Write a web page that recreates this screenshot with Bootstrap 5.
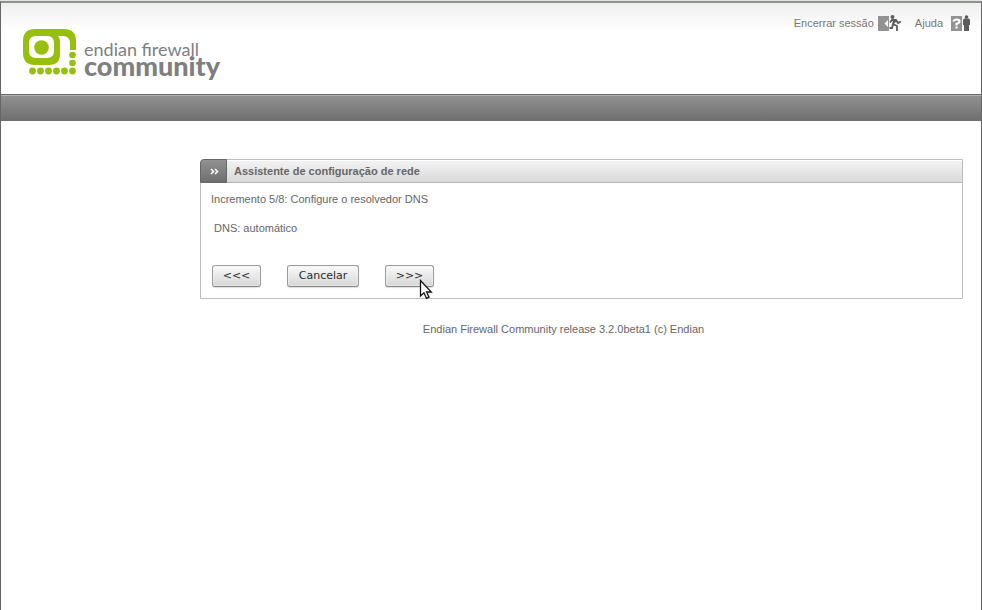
<!DOCTYPE html>
<html lang="pt-BR">
<head>
<meta charset="utf-8">
<meta name="viewport" content="width=device-width, initial-scale=1">
<title>Assistente de configuração de rede</title>
<link href="https://cdn.jsdelivr.net/npm/bootstrap@5.3.0/dist/css/bootstrap.min.css" rel="stylesheet">
<style>
  body { font: 11px/16px "Liberation Sans", Arial, sans-serif; color: #666; background: #fff; }
  a { color: #777; }
  .window-edge { border-top: 1px solid #e2e4e1; }
  .window-frame { flex: 1; border: 1px solid #666; border-top: 2px solid #8f938e; border-bottom: 0; }
  .top-area { height: 91px; background: linear-gradient(#efefef, #fff 28px); }
  .brand { margin: 26px 0 0 22px; gap: 8px; }
  .brand-words { font-family: Lato, sans-serif; color: #7d7f81; margin-top: 13px; }
  .brand-first { font-size: 18px; line-height: 15px; }
  .brand-second { font-size: 27px; font-weight: 900; line-height: 17px; }
  .session-links { padding: 12px 11px 0 0; gap: 14px; }
  .menu-strip { height: 27px; border-top: 1px solid #6b6b6b; box-shadow: inset 0 1px #b2b2b2; background: linear-gradient(#929292, #6e6e6e); }
  .content-area { margin: 38px 18px 0 199px; }
  .wizard { border: 1px solid #bdbdbd; border-top-left-radius: 4px; }
  .wizard-head { height: 23px; background: linear-gradient(#f4f4f4, #d9d9d9); border-bottom: 1px solid #b5b5b5; box-shadow: inset 0 1px #fff; }
  .wizard-tab { width: 27px; height: 24px; margin: -1px 0 -1px -1px; padding-left: 2px; border: 1px solid #686868; border-radius: 4px 0 0 0; background: linear-gradient(#929292, #6e6e6e); }
  .wizard-title { font-size: 11px; line-height: 16px; padding-left: 7px; }
  .wizard-body { padding: 8px 10px 11px; }
  .dns-line { padding: 13px 3px 29px; }
  .wizard-actions { gap: 26px; padding-left: 1px; }
  .tool-btn { --bs-btn-color: #2c2c2c; --bs-btn-hover-color: #2c2c2c; --bs-btn-border-color: #9c9c9c; --bs-btn-hover-border-color: #888; height: 22px; min-width: 49px; padding: 0 10px; font: 11px/20px "DejaVu Sans", sans-serif; border-radius: 3px; border-bottom-color: #858585; background: linear-gradient(#fafafa, #d6d6d6); box-shadow: inset 0 0 0 1px #f4f4f488, 0 1px 1px #0002; }
  .step-btn { padding: 0 9px; }
  .cancel-btn { min-width: 72px; }
  .pointer { left: 34px; top: 14px; pointer-events: none; }
  .release { margin: 22px 36px 0 0; }
</style>
<script src="https://cdn.jsdelivr.net/npm/bootstrap@5.3.0/dist/js/bootstrap.bundle.min.js"></script>
</head>
<body>
<div class="window-edge d-flex flex-column min-vh-100">
<div class="window-frame">
  <header>
    <div class="top-area d-flex justify-content-between align-items-start">
      <div class="brand d-flex">
        <svg width="53" height="46" viewBox="0 0 53 46" fill="#97bf0d" aria-hidden="true">
          <path fill-rule="evenodd" d="M12 0H41Q53 0 53 12V21H47V15Q47 7 40 7H35Q37 9 37 12V25Q37 36 26 36H12Q0 36 0 24V12Q0 0 12 0ZM13 7Q6 7 6 14V22Q6 29 13 29H24Q31 29 31 22V14Q31 7 24 7Z"/>
          <circle cx="18.500" cy="18.500" r="7.300"/>
          <circle cx="49.500" cy="26" r="3.300"/><circle cx="49.500" cy="34" r="3.300"/>
          <circle cx="9.500" cy="42" r="3.400"/><circle cx="17.500" cy="42" r="3.400"/><circle cx="25.500" cy="42" r="3.400"/>
          <circle cx="33.500" cy="42" r="3.400"/><circle cx="41.500" cy="42" r="3.400"/><circle cx="49.500" cy="42" r="3.400"/>
        </svg>
        <div class="brand-words">
          <div class="brand-first">endian firewall</div>
          <div class="brand-second">community</div>
        </div>
      </div>
      <nav class="session-links d-flex">
        <a href="#" class="d-flex text-decoration-none">Encerrar sessão
          <svg class="ms-1" width="23" height="16" viewBox="0 0 23 16" aria-hidden="true">
            <path fill="#929292" d="M0 1H11V16H0Z"/><path fill="#fff" d="M10 5V12L6.500 8.500Z"/>
            <circle cx="14.500" cy="2" r="2" fill="#5c5c5c"/>
            <path d="M12 7.500L14 5L18 5L20 8L23 6.500M18 5L15 9L19 11V16M15 9.500L14 13H11.500M16 5L15 10" fill="none" stroke="#5c5c5c" stroke-width="1.800"/>
          </svg></a>
        <a href="#" class="d-flex text-decoration-none">Ajuda
          <svg class="ms-2" width="19" height="16" viewBox="0 0 19 16" aria-hidden="true">
            <path fill="#929292" d="M0 1H11V16H0Z"/>
            <path d="M2.500 6.500Q3 4.500 5.500 4.500Q8.500 4.500 8.500 6.500Q8.500 8 5.500 8.800V10.500M5.500 11.500V13.500" fill="none" stroke="#fff" stroke-width="2.200"/>
            <circle cx="15.500" cy="2" r="1.800" fill="#5c5c5c"/><path fill="#5c5c5c" d="M13 3.500H18L19 5V10H18V16H13V10H12V5Z"/>
          </svg></a>
      </nav>
    </div>
    <div class="menu-strip"></div>
  </header>
  <main class="content-area">
    <section class="wizard">
      <div class="wizard-head d-flex align-items-center">
        <div class="wizard-tab d-flex align-items-center justify-content-center">
          <svg width="9" height="7" viewBox="0 0 9 7" fill="none" stroke="#fff" stroke-width="1.500" aria-hidden="true"><path d="M1 1L3.500 3.500L1 6M5 1L7.500 3.500L5 6"/></svg>
        </div>
        <h1 class="wizard-title fw-bold mb-0">Assistente de configuração de rede</h1>
      </div>
      <form class="wizard-body">
        <div>Incremento 5/8: Configure o resolvedor DNS</div>
        <div class="dns-line">DNS: automático</div>
        <div class="wizard-actions d-flex">
          <button type="button" class="btn tool-btn step-btn">&lt;&lt;&lt;</button>
          <button type="button" class="btn tool-btn cancel-btn">Cancelar</button>
          <div class="d-flex position-relative">
            <button type="button" class="btn tool-btn step-btn">&gt;&gt;&gt;</button>
            <svg class="pointer position-absolute" width="14" height="22" viewBox="0 0 14 22" aria-hidden="true"><path d="M1.500 1.500V17L5 13.800L7.500 19.300L10 18.200L7.600 13H12.300Z" fill="#fff" stroke="#111" stroke-width="1.300"/></svg>
          </div>
        </div>
      </form>
    </section>
    <footer class="release text-center">Endian Firewall Community release 3.2.0beta1 (c) Endian</footer>
  </main>
</div>
</div>
</body>
</html>
